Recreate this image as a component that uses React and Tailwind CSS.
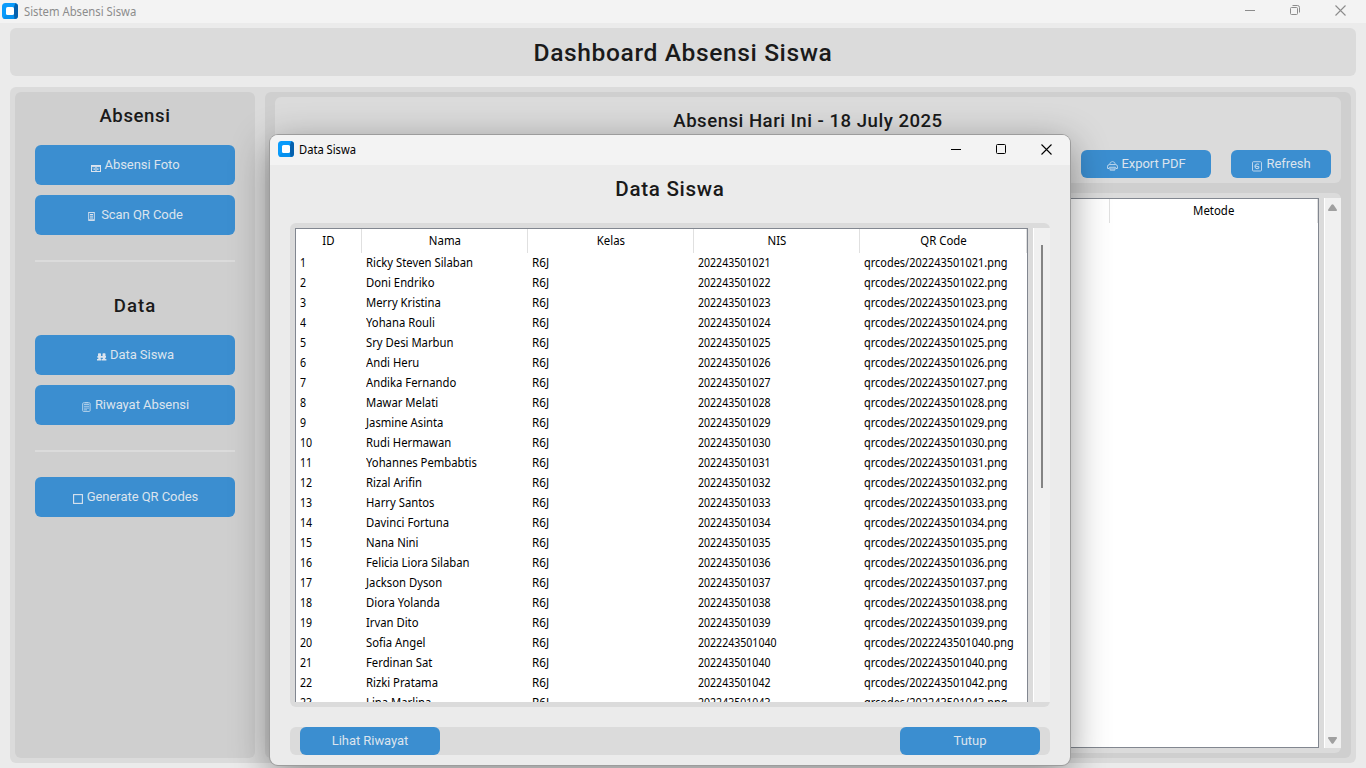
import React from 'react';

const students = [
  ['Ricky Steven Silaban', '202243501021'],
  ['Doni Endriko', '202243501022'],
  ['Merry Kristina', '202243501023'],
  ['Yohana Rouli', '202243501024'],
  ['Sry Desi Marbun', '202243501025'],
  ['Andi Heru', '202243501026'],
  ['Andika Fernando', '202243501027'],
  ['Mawar Melati', '202243501028'],
  ['Jasmine Asinta', '202243501029'],
  ['Rudi Hermawan', '202243501030'],
  ['Yohannes Pembabtis', '202243501031'],
  ['Rizal Arifin', '202243501032'],
  ['Harry Santos', '202243501033'],
  ['Davinci Fortuna', '202243501034'],
  ['Nana Nini', '202243501035'],
  ['Felicia Liora Silaban', '202243501036'],
  ['Jackson Dyson', '202243501037'],
  ['Diora Yolanda', '202243501038'],
  ['Irvan Dito', '202243501039'],
  ['Sofia Angel', '2022243501040'],
  ['Ferdinan Sat', '202243501040'],
  ['Rizki Pratama', '202243501042'],
  ['Lina Marlina', '202243501043'],
];

const COLS = 'grid grid-cols-[66px_166px_166px_166px_167px]';

function AppIcon() {
  return (
    <svg width="16" height="16" viewBox="0 0 16 16" className="shrink-0">
      <rect width="16" height="16" rx="3.5" fill="#0a9bfb" />
      <path d="M12 4L13.2 .3Q16 .9 16 3.5V12.5Q16 16 12.5 16H11.5L12 12Z" fill="#0560ad" />
      <path d="M1 15L4 12H12L12.5 16H3.5Q1.8 16 1 15Z" fill="#0590ee" />
      <rect x="4" y="4" width="8" height="8" rx="1.6" fill="#fff" />
    </svg>
  );
}

function Minimize() {
  return <svg width="10" height="10" viewBox="0 0 10 10"><path d="M0 5.5H10" stroke="currentColor" /></svg>;
}
function Close() {
  return <svg width="11" height="11" viewBox="0 0 11 11"><path d="M.5 .5L10.5 10.5M10.5 .5L.5 10.5" stroke="currentColor" strokeWidth="1.1" /></svg>;
}
function Restore() {
  return (
    <svg width="10" height="10" viewBox="0 0 10 10" fill="none" stroke="currentColor">
      <rect x=".5" y="2.5" width="7" height="7" rx="1" />
      <path d="M2.5 .5H7.5Q9.5 .5 9.5 2.5V7.5" />
    </svg>
  );
}
function Maximize() {
  return <svg width="10" height="10" viewBox="0 0 10 10"><rect x=".5" y=".5" width="9" height="9" rx="1" fill="none" stroke="currentColor" /></svg>;
}

const glyphs = {
  photo: (
    <svg width="10" height="7" viewBox="0 0 10 7" className="mr-[3px] mt-[7px]" fill="none" stroke="#dce4ee">
      <rect x=".5" y=".5" width="9" height="6" />
      <path d="M1 1.6H9" strokeWidth="1" />
      <path d="M2 3.4L3.4 5M8 3.4L6.6 5" strokeWidth=".8" />
      <circle cx="5" cy="4" r="1.3" strokeWidth=".9" />
    </svg>
  ),
  phone: (
    <svg width="7" height="9" viewBox="0 0 7 9" className="mr-[6px] mt-[3px]" fill="none" stroke="#dce4ee">
      <rect x=".7" y=".5" width="5.6" height="8" strokeWidth=".9" />
      <path d="M2 2.5H5M2 4.2H5M2 6H5M1 7.8H6" strokeWidth="1" />
    </svg>
  ),
  people: (
    <svg width="10" height="8" viewBox="0 0 10 8" className="mr-[3px] mt-1" fill="#dce4ee">
      <rect x="1" y=".2" width="3" height="3" rx=".8" />
      <rect x="5.5" y=".2" width="3" height="3" rx=".8" />
      <path d="M0.4 3H9V4.8H0.4ZM1.3 4.6H3.7V6.2H1.3ZM5.8 4.6H8.2V6.2H5.8ZM0 6H4.5V7.4H0ZM5 6H9.4V7.4H5Z" />
    </svg>
  ),
  list: (
    <svg width="9" height="10" viewBox="0 0 9 10" className="mr-1 mt-1" fill="none" stroke="#b5d3ec">
      <rect x=".7" y=".8" width="7.4" height="8.6" rx=".8" />
      <path d="M2 2.5H7M2 4.3H7M2 6.1H7M2 7.8H5" strokeWidth=".9" />
      <path d="M3 .6H6" />
    </svg>
  ),
  square: (
    <svg width="10" height="10" viewBox="0 0 10 10" className="mr-1 mt-1" fill="none" stroke="#dce4ee">
      <rect x=".6" y=".6" width="8.8" height="8.8" strokeWidth="1.1" />
    </svg>
  ),
  print: (
    <svg width="11" height="10" viewBox="0 0 11 10" className="mr-[3px] mt-[3px]" fill="none" stroke="#c3daee">
      <path d="M2.5 3.5Q3 .6 5.5 .6T8.5 3.5" strokeWidth=".8" />
      <path d="M2 7.5H.6V5.2Q.8 3.6 2.4 3.6H8.6Q10.2 3.6 10.4 5.2V7.5H9" />
      <path d="M2.5 6.2H8.5L7.8 9.2H3.2Z" fill="#7fb3df" strokeWidth=".8" />
    </svg>
  ),
  refresh: (
    <svg width="10" height="11" viewBox="0 0 10 11" className="mr-1 mt-1" fill="none" stroke="#c8ddf0">
      <rect x=".5" y=".7" width="9" height="9.3" rx="1" strokeWidth=".9" />
      <path d="M7 3.3Q5 2.4 3.6 3.6T3.4 7Q5 8.4 6.8 7.2V5.6H5M3 5.2H5" />
    </svg>
  ),
};

function Btn({ icon, className, children }) {
  return (
    <button className={`flex items-center justify-center rounded-md bg-[#3b8ed0] text-[13px] tracking-[-0.05px] text-[#dce4ee] ${icon ? 'pl-px' : ''} ${className}`}>
      {icon && glyphs[icon]}
      <span>{children}</span>
    </button>
  );
}

function Cell({ scale, children }) {
  return (
    <div className="pl-1 whitespace-nowrap">
      <span className={`inline-block origin-left ${scale}`}>{children}</span>
    </div>
  );
}
function Head({ children }) {
  return (
    <div className="flex h-[24px] items-center justify-center border-r border-[#e0e0e0]">
      <span className="scale-x-[0.95]">{children}</span>
    </div>
  );
}

function Dialog() {
  return (
    <div className="absolute left-[270px] top-[135px] flex h-[630px] w-[800px] flex-col overflow-hidden rounded-lg bg-[#ebebeb] shadow-[0_0_0_1px_#9c9c9c,0_10px_38px_rgba(0,0,0,0.42)]">
      <div className="flex h-[30px] shrink-0 items-center bg-[#f3f3f3] pl-2 text-black">
        <div className="-mt-[2px]"><AppIcon /></div>
        <span className="ml-[5px] flex-1 origin-left scale-x-[0.93] font-['Noto_Sans'] text-[12px]">Data Siswa</span>
        <div className="-mt-[2px] flex items-center gap-[35px] pr-[18px]">
          <Minimize /><Maximize /><Close />
        </div>
      </div>
      <h2 className="flex h-[58px] shrink-0 items-center justify-center pb-[10px] text-[20.6px] font-medium tracking-[0.7px]">Data Siswa</h2>
      <div className="mx-5 flex h-[484px] shrink-0 rounded-md bg-[#dbdbdb] py-[5px] pl-[5px]">
        <div className="w-[733px] overflow-hidden border-x border-t border-[#828790] bg-white font-['Noto_Sans'] text-[12px] text-black">
          <div className={COLS}>
            <Head>ID</Head><Head>Nama</Head><Head>Kelas</Head><Head>NIS</Head><Head>QR Code</Head>
          </div>
          {students.map(([name, nis], i) => (
            <div key={i} className={`${COLS} h-5 leading-5`}>
              <Cell scale="scale-x-[0.885]">{i + 1}</Cell>
              <Cell scale="scale-x-[0.94]">{name}</Cell>
              <Cell scale="scale-x-[0.97]">R6J</Cell>
              <Cell scale="scale-x-[0.88]">{nis}</Cell>
              <Cell scale="scale-x-[0.912]">qrcodes/{nis}.png</Cell>
            </div>
          ))}
        </div>
        <div className="ml-[5px] w-[17px] border-l border-white bg-[#f0f0f0] pl-[7px] pt-[17px]">
          <div className="h-[243px] w-[2px] bg-[#858585]" />
        </div>
      </div>
      <div className="mx-5 mt-5 flex h-7 shrink-0 justify-between rounded-md bg-[#dbdbdb] px-[10px]">
        <Btn className="h-7 w-[140px]">Lihat Riwayat</Btn>
        <Btn className="h-7 w-[140px]">Tutup</Btn>
      </div>
    </div>
  );
}

export default function App() {
  return (
    <div className="relative flex h-[768px] w-[1366px] flex-col overflow-hidden bg-[#ebebeb] font-[Roboto] text-[#1a1a1a]">
      <div className="flex h-[23px] shrink-0 items-center bg-[#f3f3f3] pl-[2px] text-[#8c8c8c]">
        <div className="-mt-px"><AppIcon /></div>
        <span className="ml-[6px] flex-1 origin-left scale-x-[0.94] font-['Noto_Sans'] text-[12px]">Sistem Absensi Siswa</span>
        <div className="-mt-[3px] flex items-center gap-[35px] pr-[20px]">
          <Minimize /><Restore /><Close />
        </div>
      </div>
      <h1 className="mx-[10px] mt-[5px] flex h-12 shrink-0 items-center justify-center rounded-md bg-[#dbdbdb] pt-[2px] text-[24.6px] font-medium tracking-[0.6px]">Dashboard Absensi Siswa</h1>
      <div className="mx-[10px] mt-[11px] flex h-[676px] shrink-0 gap-[10px] rounded-md bg-[#dbdbdb] p-[5px]">
        <aside className="flex w-[240px] flex-col rounded-md bg-[#cfcfcf] px-5">
          <h2 className="mt-[10px] h-[28px] text-center text-[18.6px] font-medium leading-[28px] tracking-[0.6px]">Absensi</h2>
          <Btn icon="photo" className="mt-[15px] h-10">Absensi Foto</Btn>
          <Btn icon="phone" className="mt-[10px] h-10">Scan QR Code</Btn>
          <div className="mt-[25px] h-[2px] bg-[#dbdbdb]" />
          <h2 className="mt-[30px] h-[28px] text-center text-[18.6px] font-medium leading-[28px] tracking-[1px]">Data</h2>
          <Btn icon="people" className="mt-[15px] h-10">Data Siswa</Btn>
          <Btn icon="list" className="mt-[10px] h-10">Riwayat Absensi</Btn>
          <div className="mt-[25px] h-[2px] bg-[#dbdbdb]" />
          <Btn icon="square" className="mt-[25px] h-10">Generate QR Codes</Btn>
        </aside>
        <main className="flex flex-1 flex-col gap-[10px] rounded-md bg-[#cfcfcf] py-[5px] px-[10px]">
          <section className="h-[86px] rounded-md bg-[#dbdbdb]">
            <h2 className="pt-[10px] text-center text-[18.6px] font-medium leading-[28px] tracking-[0.5px]">Absensi Hari Ini - 18 July 2025</h2>
            <div className="mt-[15px] flex justify-end gap-5 pr-[10px]">
              <Btn icon="print" className="h-7 w-[130px]">Export PDF</Btn>
              <Btn icon="refresh" className="h-7 w-[100px]">Refresh</Btn>
            </div>
          </section>
          <section className="flex flex-1 rounded-md bg-[#dbdbdb] py-[5px] pl-[5px]">
            <div className="flex flex-1 justify-end border border-[#828790] bg-white font-['Noto_Sans'] text-[12px] text-black">
              <div className="flex h-[24px] w-[209px] items-center justify-center border-x border-[#e0e0e0]">
                <span className="scale-x-[0.95]">Metode</span>
              </div>
            </div>
            <div className="ml-[5px] flex w-[17px] flex-col items-center justify-between border-l border-white bg-[#f0f0f0] pt-[6px] pb-[4px] pr-px">
              <svg width="9" height="7" viewBox="0 0 9 7"><path d="M3.5 .8Q4.5 -.3 5.5 .8L8.8 5.5V7H.2V5.5Z" fill="#a0a0a0" /></svg>
              <svg width="9" height="7" viewBox="0 0 9 7"><path d="M3.5 6.2Q4.5 7.3 5.5 6.2L8.8 1.5V0H.2V1.5Z" fill="#a0a0a0" /></svg>
            </div>
          </section>
        </main>
      </div>
      <Dialog />
    </div>
  );
}
